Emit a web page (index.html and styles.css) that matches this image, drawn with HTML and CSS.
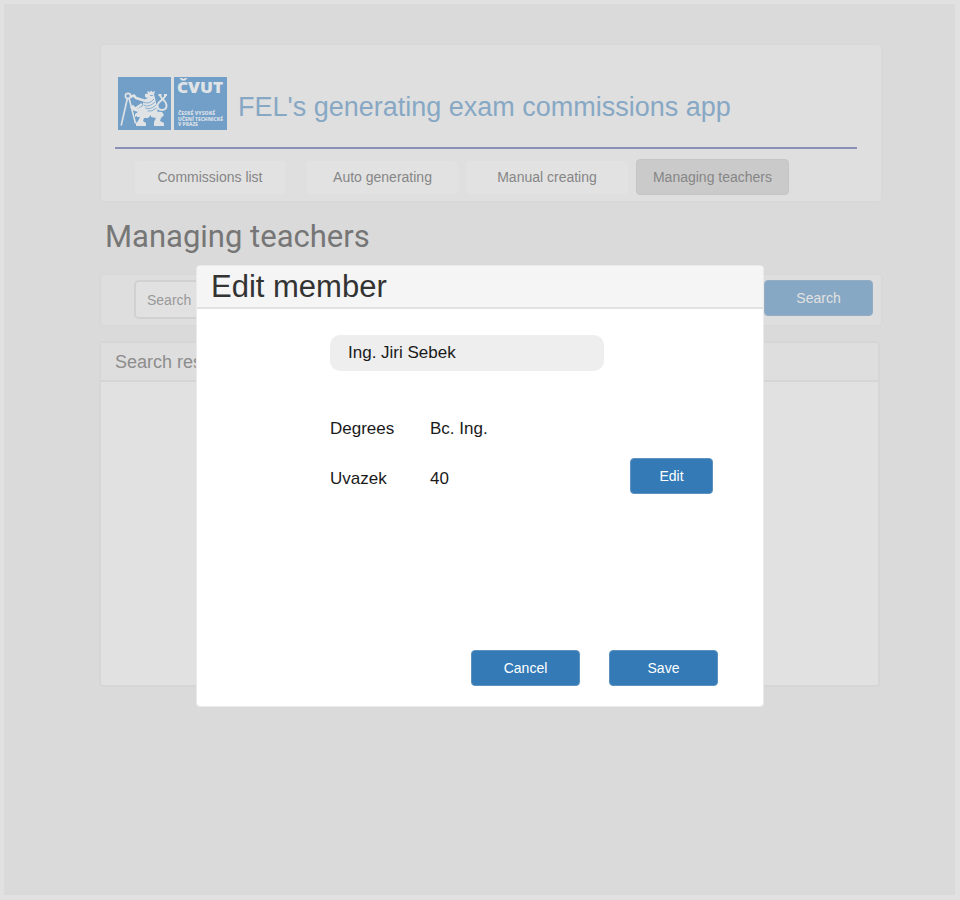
FILE: index.html
```html
<!DOCTYPE html>
<html lang="en">
<head>
<meta charset="utf-8">
<title>Managing teachers</title>
<link rel="stylesheet" href="styles.css">
</head>
<body>
<div class="page">
  <header class="header">
    <div class="brand">
      <svg class="logo" viewBox="0 0 109 53" width="109" height="53" role="img">
        <rect class="logo-bg" width="53" height="53"/>
        <rect class="logo-bg" x="56" width="53" height="53"/>
        <g class="lion">
          <path d="M9.500 21L3.200 48.500M11 21L17.500 46.500"/>
          <circle cx="10" cy="19" r="2.600"/>
          <path class="thick" d="M12 20L16 18.500L18 21L26 23.500M14 28.500L17 32L24 27"/>
          <path class="tail" d="M42 18C42 22 48.500 23 48.500 28.500C48.500 31.500 46.500 33 44 33C41 33 39.500 31 39.500 28.500C39.500 24 47.500 22 47.500 18M40.500 18H43.500M46 18H49"/>
        </g>
        <g class="lion-fill">
          <path d="M27 17L30 16.500L29 14L32 15L33 13.500L34.500 15L37 14L36 17.500L37 21L38 26L40 31L39 35L35 38H28L23 34L25 28V23L30 21L27 20Z"/>
          <path d="M12 30L16 29L19 32L25 29L29 35L25 38L22 37L17 40V37L20 35L14 33Z"/>
          <path d="M19 36L31 35L33 38L30 41L26 41L25 44L28 46V49H18V46L20 44L22 40H19Z"/>
          <path d="M33 34L44 35L46 38L43 41L42 44L46 46V49H36V45L38 41L33 40Z"/>
        </g>
        <path class="mane" d="M25 25Q31 28 36 22M25.500 28Q31 31 37 25M27 31Q33 33 38 28M29.500 34Q34 35 38.500 31M32 18.500H35"/>
        <text class="logo-name" x="59" y="16" textLength="46" lengthAdjust="spacingAndGlyphs">ČVUT</text>
        <g class="logo-small">
          <text x="60" y="38" textLength="37" lengthAdjust="spacingAndGlyphs">ČESKÉ VYSOKÉ</text>
          <text x="60" y="43.800" textLength="45" lengthAdjust="spacingAndGlyphs">UČENÍ TECHNICKÉ</text>
          <text x="60" y="49.200" textLength="20" lengthAdjust="spacingAndGlyphs">V PRAZE</text>
        </g>
      </svg>
      <div class="app-name">FEL's generating exam commissions app</div>
    </div>
    <nav class="nav">
      <a class="tab tab-list">Commissions list</a>
      <a class="tab tab-auto">Auto generating</a>
      <a class="tab tab-manual">Manual creating</a>
      <a class="tab tab-active">Managing teachers</a>
    </nav>
  </header>
  <h1 class="title">Managing teachers</h1>
  <section class="search">
    <div class="field">Search</div>
    <div class="button button-dim">Search</div>
  </section>
  <section class="results">
    <div class="results-head">Search results</div>
  </section>
  <div class="modal">
    <div class="modal-head">Edit member</div>
    <div class="modal-body">
      <div class="member">Ing. Jiri Sebek</div>
      <div class="row"><span class="label">Degrees</span><span class="value">Bc. Ing.</span></div>
      <div class="row"><span class="label">Uvazek</span><span class="value">40</span><div class="button button-edit">Edit</div></div>
    </div>
    <div class="actions">
      <div class="button">Cancel</div>
      <div class="button">Save</div>
    </div>
  </div>
</div>
</body>
</html>
```
FILE: styles.css
```css
* { box-sizing: border-box; }
body {
  margin: 0;
  padding: 4px 5px 5px 4px;
  height: 900px;
  overflow: hidden;
  background: #e1e1e1;
  font: 14px "Liberation Sans", Arial, sans-serif;
}
.page {
  position: relative;
  height: 891px;
  padding: 39px 72px 0 95px;
  background: #dadada;
}
.header {
  height: 160px;
  padding: 33px 24px 0 15px;
  border: 2px solid #d8d8d8;
  border-radius: 5px;
  background: #dfdfdf;
  background-clip: padding-box;
}
.brand {
  display: flex;
  height: 72px;
  margin: -1px 0 0 -1px;
  padding: 0 0 0 3px;
  border-bottom: 2px solid #8a8fb5;
}
.logo { flex: none; display: block; }
.logo-bg { fill: #719fc8; }
.lion { fill: none; stroke: #dfe3e5; stroke-width: 1.6; stroke-linejoin: round; }
.thick { stroke-width: 2.6; }
.tail { stroke-width: 1.9; }
.lion-fill { fill: #dfe3e5; }
.mane { fill: none; stroke: #719fc8; stroke-width: .8; }
.logo-name { fill: #e1e4e6; font: 800 16px "Open Sans", sans-serif; }
.logo-small { fill: #d5dee5; font: 800 5px "Open Sans", sans-serif; }
.app-name {
  margin-left: 11px;
  font-size: 27px;
  line-height: 31px;
  padding-top: 15px;
  color: #87a8c4;
  white-space: nowrap;
}
.nav {
  display: flex;
  align-items: center;
  height: 36px;
  margin-top: 10px;
  padding-left: 19px;
  color: #868686;
}
.tab {
  height: 33px;
  line-height: 32px;
  border-radius: 3px;
  background: #e2e2e2;
  text-align: center;
}
.tab-list { width: 150px; }
.tab-auto { width: 151px; margin-left: 22px; }
.tab-manual { width: 162px; margin-left: 8px; }
.tab-active {
  width: 153px;
  height: 36px;
  margin-left: 8px;
  border: 1px solid #c5c5c5;
  border-radius: 4px;
  line-height: 34px;
  background: #cacaca;
}
.title {
  height: 70px;
  margin: 0;
  padding: 15px 0 0 6px;
  font: 400 31px/38px Roboto, sans-serif;
  color: #767676;
}
.search {
  display: flex;
  justify-content: space-between;
  height: 54px;
  padding: 5px 8px 0 33px;
  border: 2px solid #d8d8d8;
  border-radius: 5px;
  background: #dedede;
}
.field {
  width: 300px;
  height: 39px;
  padding-left: 11px;
  border: 2px solid #d1d1d1;
  border-radius: 5px;
  background: #e1e1e1;
  line-height: 37px;
  color: #999;
}
.button {
  width: 109px;
  height: 36px;
  border: 1px solid #5c91c0;
  border-radius: 4px;
  background: #337ab7;
  color: #fff;
  line-height: 34px;
  text-align: center;
}
.button-dim {
  border-color: #93adc4;
  background: #87a8c4;
  color: #e1e1e1;
}
.results {
  width: 781px;
  height: 346px;
  margin-top: 14px;
  border: 2px solid #d6d6d6;
  border-radius: 4px;
  background: #e1e1e1;
}
.results-head {
  height: 39px;
  padding-left: 14px;
  border-bottom: 2px solid #d5d5d5;
  background: #dedede;
  font-size: 18px;
  line-height: 38px;
  color: #8d8d8d;
}
.modal {
  position: absolute;
  left: 192px;
  top: 261px;
  width: 568px;
  height: 442px;
  border: 1px solid #eaeaea;
  border-radius: 4px;
  background: #fff;
}
.modal-head {
  height: 43px;
  padding-left: 14px;
  border-bottom: 2px solid #e2e2e2;
  border-radius: 3px 3px 0 0;
  background: #f5f5f5;
  font-size: 31px;
  line-height: 41px;
  color: #333;
}
.modal-body {
  height: 341px;
  padding: 26px 50px 0 133px;
  font-size: 17px;
  color: #1a1a1a;
}
.member {
  width: 274px;
  height: 36px;
  margin-bottom: 33px;
  padding-left: 18px;
  border-radius: 10px;
  background: #eee;
  line-height: 35px;
}
.row { display: flex; align-items: center; height: 50px; }
.label { width: 100px; }
.value { flex: 1; }
.button-edit { width: 83px; margin-top: -6px; font-size: 14px; }
.actions {
  display: flex;
  justify-content: flex-end;
  gap: 29px;
  padding-right: 45px;
}
```
